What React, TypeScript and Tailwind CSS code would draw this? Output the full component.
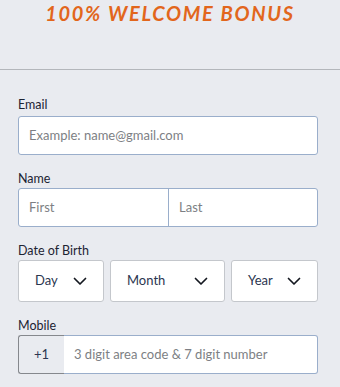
import React from "react";

function Chevron() {
  return (
    <svg width="14" height="9" viewBox="0 0 14 9" fill="none">
      <polyline points="1.5,1.5 7,7 12.5,1.5" stroke="#141820" strokeWidth="1.7" strokeLinecap="round" strokeLinejoin="round" />
    </svg>
  );
}

function Select({ label, w }: { label: string; w: string }) {
  return (
    <div className={`${w} h-[42px] bg-white border border-[#c4c7cc] rounded-[3px] flex items-center justify-between pl-[16px] pr-[16px]`}>
      <span className="text-[13px] text-[#2b3650]">{label}</span>
      <Chevron />
    </div>
  );
}

export default function App() {
  return (
    <div className="w-[340px] h-[387px] bg-[#e9ebf0] overflow-hidden" style={{ fontFamily: "Lato, 'Open Sans', sans-serif" }}>
      <div className="h-[70px] border-b border-[#b3b6bb] flex justify-center">
        <div className="-mt-[1px] text-[20px] leading-[28px] font-bold italic tracking-[1.7px] text-[#e2661c]">100% WELCOME BONUS</div>
      </div>
      <div className="pl-[18px] w-[318px] pt-[27px]">
        <div className="text-[12.5px] leading-[16px] text-[#1c2333] mb-[3px]">Email</div>
        <div className="h-[39px] bg-white border border-[#9aaecb] rounded-[3px] flex items-center pl-[10px]">
          <span className="text-[13px] text-[#7d7f84]">Example: name@gmail.com</span>
        </div>

        <div className="text-[12.5px] leading-[16px] text-[#1c2333] mt-[16px] mb-[1px]">Name</div>
        <div className="h-[39px] bg-white border border-[#9aaecb] rounded-[3px] flex">
          <div className="w-[150px] border-r border-[#9aaecb] flex items-center pl-[10px]">
            <span className="text-[13px] text-[#7d7f84]">First</span>
          </div>
          <div className="flex-1 flex items-center pl-[10px]">
            <span className="text-[13px] text-[#7d7f84]">Last</span>
          </div>
        </div>

        <div className="text-[12.5px] leading-[16px] text-[#1c2333] mt-[16px] mb-[1px]">Date of Birth</div>
        <div className="flex gap-[6px]">
          <Select label="Day" w="w-[86px]" />
          <Select label="Month" w="w-[115px]" />
          <Select label="Year" w="w-[87px]" />
        </div>

        <div className="text-[12.5px] leading-[16px] text-[#1c2333] mt-[16px] mb-[1px]">Mobile</div>
        <div className="h-[39px] flex">
          <div className="w-[46px] bg-[#e9ebf0] border border-r-0 border-[#85888d] rounded-l-[3px] flex items-center justify-center text-[13px] text-[#2b3650]">+1</div>
          <div className="flex-1 bg-white border border-l-0 border-[#9aaecb] rounded-r-[3px] flex items-center pl-[10px]">
            <span className="text-[13px] text-[#7d7f84]">3 digit area code &amp; 7 digit number</span>
          </div>
        </div>
      </div>
    </div>
  );
}
